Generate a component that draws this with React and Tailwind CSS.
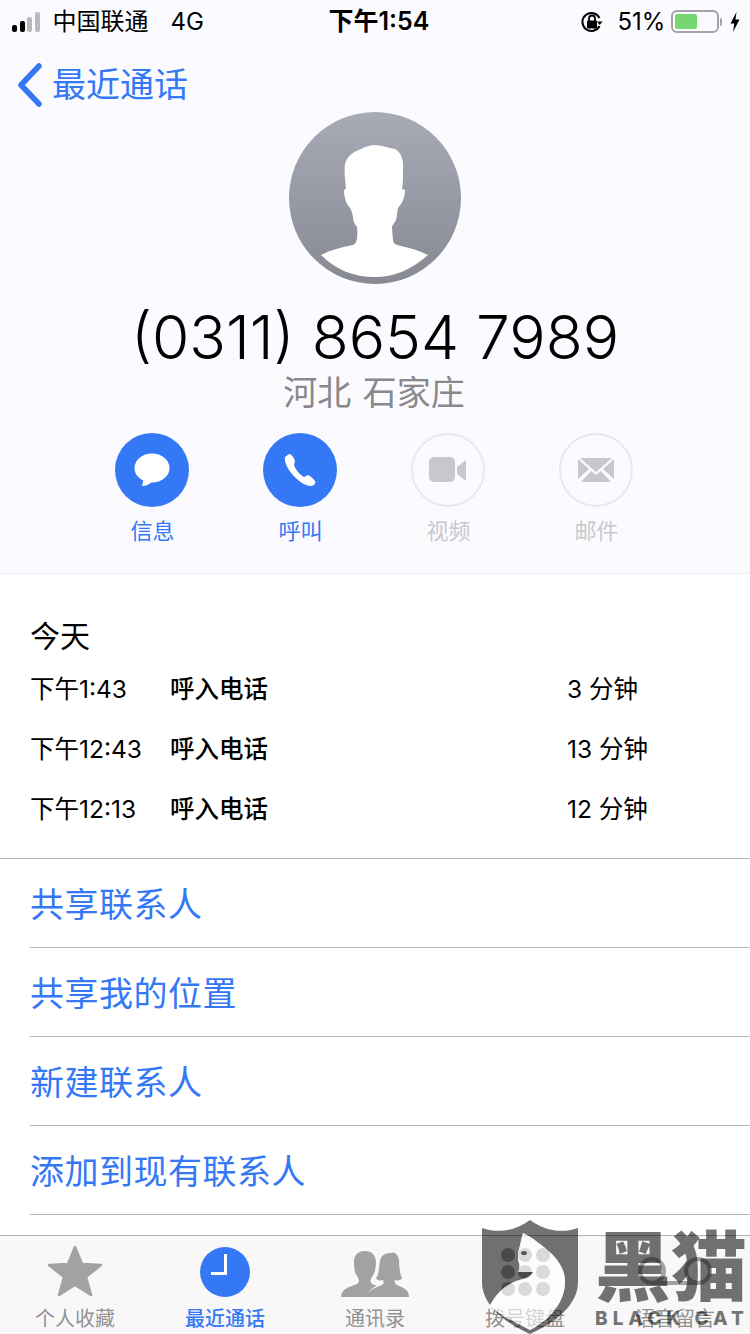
const CJK = { fontFamily: '"Inter", "Noto Sans CJK SC", sans-serif' };

const calls = [
  { time: "下午1:43", dur: "3 分钟" },
  { time: "下午12:43", dur: "13 分钟" },
  { time: "下午12:13", dur: "12 分钟" },
];

const links = ["共享联系人", "共享我的位置", "新建联系人", "添加到现有联系人"];

function StatusBar() {
  return (
    <div className="flex h-10 items-center pl-3 pt-[3px] text-[24px] leading-none text-black">
      <div className="flex items-end gap-[2.5px]">
        <span className="h-[7px] w-[5px] rounded-[2px] bg-black" />
        <span className="h-[11px] w-[5px] rounded-[2px] bg-black" />
        <span className="h-[15px] w-[5px] rounded-[2px] bg-[#b9b9be]" />
        <span className="h-[20px] w-[5px] rounded-[2px] bg-[#b9b9be]" />
      </div>
      <span className="ml-[13px] w-[118px] whitespace-nowrap">中国联通</span>
      <span className="w-[158px]">4G</span>
      <span className="w-[250px] whitespace-nowrap text-[25px] font-semibold">下午1:54</span>
      <svg width="26" height="26" viewBox="0 0 26 26" className="mr-[13px]">
        <path d="M20.5 9 A9 9 0 1 0 20.5 17" fill="none" stroke="#000" strokeWidth="2" />
        <path d="M18 12.5 L23.5 12.5 L20.7 16z" fill="#000" />
        <rect x="8" y="11.5" width="10" height="8" rx="1" fill="#000" />
        <path d="M10 12 V9.5 a3 3 0 0 1 6 0 V12" fill="none" stroke="#000" strokeWidth="1.8" />
      </svg>
      <span className="w-[53px] whitespace-nowrap">51%</span>
      <div className="flex items-center">
        <div className="flex h-[23px] w-[48px] rounded-[6px] border-2 border-[#a3a3a3] p-[2px]">
          <div className="w-[55%] rounded-[2px] bg-[#76d672]" />
        </div>
        <span className="ml-[1px] h-[8px] w-[2px] rounded-r-full bg-[#a3a3a3]" />
      </div>
      <svg width="10" height="20" viewBox="0 0 10 20" className="ml-[8px]">
        <path d="M6.5 0 L0.5 11.5 H4.3 L3 20 L9.5 7.5 H5.5z" fill="#000" />
      </svg>
    </div>
  );
}

function Avatar() {
  return (
    <div className="relative mx-auto h-[172px] w-[172px] overflow-hidden rounded-full bg-gradient-to-b from-[#a8abb6] to-[#878a93]">
      <svg width="172" height="172" viewBox="0 0 172 172" className="absolute inset-0">
        <path
          fill="#fff"
          d="M32 143 C42 138 52 135 64 133 C68 131 69 125 68 115 C66 112 64 110 64 105 C63 100 62 97 61 96 C57 92 55 85 55 78 L57 77 C56 65 55 60 56 52 C58 44 64 40 72 37 C78 34 82 33 86 33 C92 33 100 36 106 37 C112 40 115 48 114 58 C114 65 114 72 113 77 L116 78 C116 85 113 92 109 96 C108 100 108 104 107 108 C105 112 103 113 103 116 L104 128 C104 132 108 133 112 134 C122 136 131 139 139 143 C122 158 105 165 86 165 C65 165 47 158 32 143z"
        />
      </svg>
    </div>
  );
}

function Action({ label, active, children }) {
  return (
    <div className="flex w-[74px] flex-col items-center">
      <div
        className={
          active
            ? "flex h-[74px] w-[74px] items-center justify-center rounded-full bg-[#3478f6]"
            : "flex h-[74px] w-[74px] items-center justify-center rounded-full border-2 border-[#e8e8ed]"
        }
      >
        {children}
      </div>
      <span
        className={
          active
            ? "mt-[9px] pl-[1px] text-[22px] leading-[30px] text-[#3478f6]"
            : "mt-[9px] pl-[1px] text-[22px] leading-[30px] text-[#c8c8cd]"
        }
      >
        {label}
      </span>
    </div>
  );
}

function TabItem({ label, active, children }) {
  return (
    <div className="flex w-[150px] flex-col items-center">
      <div className="flex h-[62px] items-end">{children}</div>
      <span
        className={
          active
            ? "mt-[7px] whitespace-nowrap text-[20px] font-medium leading-[30px] text-[#3478f6]"
            : "mt-[7px] whitespace-nowrap text-[20px] leading-[30px] text-[#929292]"
        }
      >
        {label}
      </span>
    </div>
  );
}

// translucent stamp lying over the tab bar, the keypad dots show through it
function Watermark() {
  return (
    <div className="pointer-events-none absolute bottom-0 left-[480px] flex h-[114px] w-[270px]">
      <svg width="100" height="114" viewBox="0 0 100 114" className="shrink-0">
        <path
          fillRule="evenodd"
          d="M2 8 C20 14 36 10 50 0 C64 10 80 14 98 8 V62 C98 85 75 103 50 114 C25 103 2 85 2 62z M10 85 C16 75 22 68 30 64 C36 60 42 60 48 57 C51 55 53 53 53 52 L38 52 C40 48 40 44 38 40 L38 33 C40 26 41 20 43 13 L52 18 C65 28 85 40 85 62 C85 82 70 100 50 110 C35 102 18 95 10 85z"
          fill="#000"
          fillOpacity="0.55"
        />
        <path
          d="M10 85 C16 75 22 68 30 64 C36 60 42 60 48 57 C51 55 53 53 53 52 L38 52 C40 48 40 44 38 40 L38 33 C40 26 41 20 43 13 L52 18 C65 28 85 40 85 62 C85 82 70 100 50 110 C35 102 18 95 10 85z"
          fill="#fff"
          fillOpacity="0.6"
        />
        <ellipse cx="44" cy="33" rx="3" ry="2" fill="#555" />
      </svg>
      <div className="ml-[15px] flex flex-col">
        <span className="mt-[8px] whitespace-nowrap text-[76px] font-black leading-[78px] text-[#0000008c]">
          黑猫
        </span>
        <span className="mt-[3px] whitespace-nowrap text-[19px] font-extrabold leading-[20px] tracking-[5px] text-[#0000008c]">
          BLACK CAT
        </span>
      </div>
    </div>
  );
}

export default function App() {
  return (
    <div className="relative h-[1334px] w-[750px] overflow-hidden bg-white" style={CJK}>
      <div className="h-[574px] border-b border-[#ececf0] bg-[#fbfbff]">
        <StatusBar />
        <div className="flex h-[72px] items-center pl-[17px] pt-[18px] text-[#3478f6]">
          <svg width="26" height="44" viewBox="0 0 26 44" fill="none">
            <path
              d="M22 3 L4 22 L22 41"
              stroke="currentColor"
              strokeWidth="5.5"
              strokeLinecap="round"
              strokeLinejoin="round"
            />
          </svg>
          <span className="ml-[9px] text-[34px] leading-none">最近通话</span>
        </div>
        <Avatar />
        <div className="mt-[19px] text-center text-[60.5px] font-[350] leading-[68px] text-black">
          (0311) 8654 7989
        </div>
        <div className="pr-[2px] text-center text-[34px] leading-[44px] text-[#88888d] [word-spacing:2px]">
          河北 石家庄
        </div>
        <div className="mt-[18px] flex justify-center gap-[74px] pr-[2px]">
          <Action label="信息" active>
            <svg width="36" height="34" viewBox="0 0 36 34">
              <ellipse cx="18" cy="15" rx="17.5" ry="14.5" fill="#fff" />
              <path d="M10 25 L8 33 C12 33 16 31 19 28z" fill="#fff" />
            </svg>
          </Action>
          <Action label="呼叫" active>
            <svg width="32" height="34" viewBox="0 0 32 34">
              <path
                fill="#fff"
                d="M5 1 L1 4 C0 8 3 15 8 21 C14 28 21 33 27 33 C30 33 32 30 31 28 C30 26 26 23 24 22 L20 24 C16 22 11 16 10 12 L11 8 C10 5 8 1 5 1z"
              />
            </svg>
          </Action>
          <Action label="视频">
            <svg width="38" height="26" viewBox="0 0 38 26">
              <rect x="0" y="0" width="26" height="25" rx="5" fill="#c8c7cc" />
              <path d="M28 10 L37 3 V24 L28 17z" fill="#c8c7cc" />
            </svg>
          </Action>
          <Action label="邮件">
            <svg width="36" height="26" viewBox="0 0 36 26">
              <path d="M2 0 H34 L18 14z" fill="#c8c7cc" transform="translate(0 1)" />
              <path d="M0 2 L11 12 L0 22z M36 2 L25 12 L36 22z" fill="#c8c7cc" />
              <path d="M13 14 L18 18 L23 14 L33 25 H3z" fill="#c8c7cc" />
            </svg>
          </Action>
        </div>
      </div>

      <div className="h-[284px] px-[30px] pt-[43px]">
        <div className="text-[30px] leading-[38px] text-black">今天</div>
        <div className="mt-[4px]">
          {calls.map((c) => (
            <div key={c.time} className="flex h-[60px] items-center text-[24.5px] text-black">
              <span className="w-[140px] whitespace-nowrap">{c.time}</span>
              <span className="w-[397px] whitespace-nowrap font-medium">呼入电话</span>
              <span className="whitespace-nowrap">{c.dur}</span>
            </div>
          ))}
        </div>
      </div>

      <div className="border-t border-[#b4b4b6]">
        {links.map((l) => (
          <div key={l} className="pl-[30px]">
            <div className="flex h-[89px] items-center border-b border-[#b4b4b6] pt-[2px] text-[34px] tracking-[0.5px] text-[#3478f6]">
              {l}
            </div>
          </div>
        ))}
      </div>

      <div className="absolute bottom-0 left-0 flex h-[99px] w-[750px] border-t border-[#b2b2b2] bg-[#f8f8f8]">
        <TabItem label="个人收藏">
          <svg width="56" height="52" viewBox="0 0 56 52">
            <path
              d="M28 2 L35 19 L54 20 L39 32 L44 50 L28 40 L12 50 L17 32 L2 20 L21 19z"
              fill="#a2a2a2"
              stroke="#a2a2a2"
              strokeWidth="2.5"
              strokeLinejoin="round"
            />
          </svg>
        </TabItem>
        <TabItem label="最近通话" active>
          <div className="relative h-[50px] w-[50px] rounded-full bg-[#3478f6]">
            <span className="absolute left-[24px] top-[7px] h-[20px] w-[3px] bg-white" />
            <span className="absolute left-[11px] top-[25px] h-[3px] w-[16px] bg-white" />
          </div>
        </TabItem>
        <TabItem label="通讯录">
          <svg width="68" height="46" viewBox="0 0 68 46">
            <path
              fill="#a2a2a2"
              d="M0 46 C0 38 8 36 16 33 C19 31 18 28 16 25 C13 21 13 15 13 9 C14 3 18 0 24 0 C31 0 34 4 35 10 C35 16 34 22 31 26 C29 29 29 31 31 33 C33 34 35 34 36 35 C30 37 27 41 26 46z"
            />
            <path
              fill="#a2a2a2"
              d="M25 46 C27 39 34 37 41 34 C43 33 43 31 42 29 C38 30 36 29 35 27 C38 24 38 16 39 10 C40 4 45 2 49 2 C54 0 57 4 58 9 C58 15 59 24 61 27 C60 29 57 30 54 29 C53 31 54 33 56 34 C62 37 68 38 68 46z"
            />
          </svg>
        </TabItem>
        <TabItem label="拨号键盘">
          <svg width="50" height="52" viewBox="0 0 50 52" fill="#a2a2a2">
            <circle cx="8" cy="10" r="7" />
            <circle cx="25" cy="10" r="7" />
            <circle cx="43" cy="10" r="7" />
            <circle cx="8" cy="27" r="7" />
            <circle cx="25" cy="27" r="7" />
            <circle cx="43" cy="27" r="7" />
            <circle cx="8" cy="44" r="7" />
            <circle cx="25" cy="44" r="7" />
            <circle cx="43" cy="44" r="7" />
          </svg>
        </TabItem>
        <TabItem label="语音留言">
          <svg width="74" height="30" viewBox="0 0 74 30" className="mb-[11px]">
            <circle cx="14" cy="15" r="12" fill="none" stroke="#a2a2a2" strokeWidth="4" />
            <circle cx="60" cy="15" r="12" fill="none" stroke="#a2a2a2" strokeWidth="4" />
            <path d="M14 27 H60" stroke="#a2a2a2" strokeWidth="4" />
          </svg>
        </TabItem>
      </div>

      <Watermark />
    </div>
  );
}
